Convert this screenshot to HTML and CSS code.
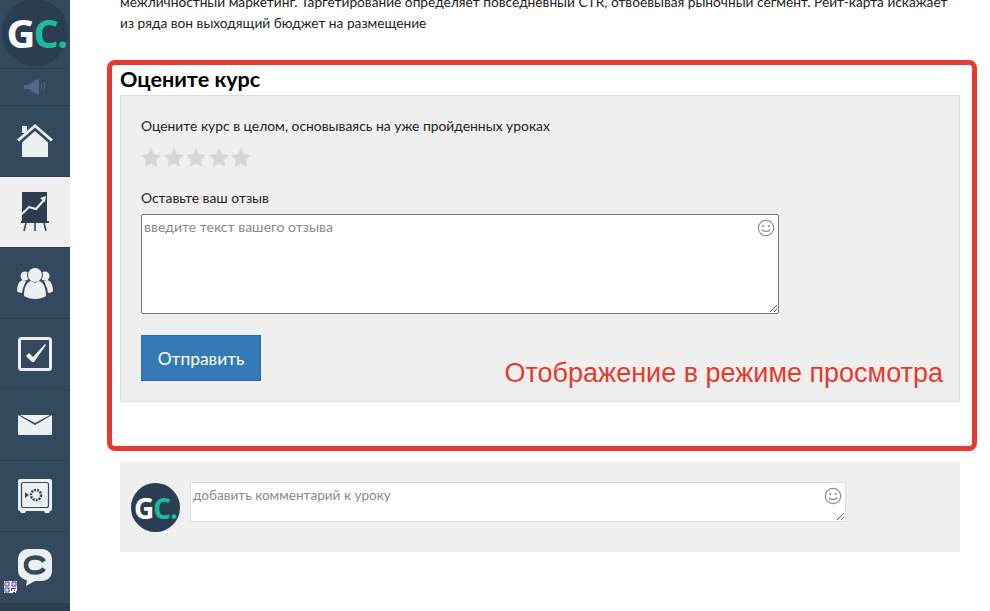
FILE: index.html
```html
<!DOCTYPE html>
<html lang="ru">
<head>
<meta charset="utf-8">
<title>Оцените курс</title>
<link rel="stylesheet" href="styles.css">
</head>
<body>
<div class="app">
  <nav class="side">
    <div class="logo-cell">
      <div class="logo"><span class="g">G</span><span class="c">C</span><span class="c">.</span></div>
    </div>
    <div class="sound">
      <svg width="22" height="16" viewBox="0 0 22 16"><rect x="0" y="6" width="4" height="4" fill="#4f6a86"/><path d="M4 6l9-5.500h2v15h-2l-9-5.500z" fill="#4f6a86"/><path d="M17 5c1 2 1 4 0 6M19.500 3c1.700 3 1.700 7 0 10" fill="none" stroke="#4f6a86" stroke-width="1"/></svg>
    </div>
    <a class="item">
      <svg width="36" height="34" viewBox="0 0 36 34"><rect x="5" y="2" width="5" height="7" fill="#ecf0f1"/><path d="M0 15.500L18 0l18 15.500-2 2L18 3.500 2 17.500z" fill="#ecf0f1"/><path d="M5 18.400L18 7l13 11.400V33H5z" fill="#ecf0f1"/></svg>
    </a>
    <a class="item active">
      <svg width="28" height="40" viewBox="0 0 28 40"><rect x="1" y="0" width="25" height="29" fill="#2c3e50"/><path d="M1 22l7-7 7 2 8-9" fill="none" stroke="#ecf0f1" stroke-width="2"/><path d="M25 4l-1 6-5-4z" fill="#ecf0f1"/><rect x="0" y="29" width="28" height="2" fill="#2c3e50"/><path d="M5 31l-2 8M14 31v8M23 31l2 8" stroke="#34495e" stroke-width="1.600"/></svg>
    </a>
    <a class="item">
      <svg width="36" height="32" viewBox="0 0 36 32"><circle cx="8" cy="9" r="4.500" fill="#ecf0f1"/><circle cx="28" cy="9" r="4.500" fill="#ecf0f1"/><path d="M0 24c0-6 2-10 6-11l3 1-3 7-1 5c-2 0-4-1-5-2zM36 24c0-6-2-10-6-11l-3 1 3 7 1 5c2 0 4-1 5-2z" fill="#ecf0f1"/><circle cx="18" cy="8" r="7.500" fill="#ecf0f1" stroke="#34495e"/><path d="M7 29c0-9 3-14 7-15l4 2 4-2c4 1 7 6 7 15-3 2-7 3-11 3s-8-1-11-3z" fill="#ecf0f1"/></svg>
    </a>
    <a class="item">
      <svg width="36" height="36" viewBox="0 0 36 36"><rect x="1.500" y="1.500" width="31" height="31" rx="2" fill="none" stroke="#ecf0f1" stroke-width="3" transform="translate(1 1)"/><path d="M9 20l3-3 4 4L28 8l1 1-12 17h-2z" fill="#ecf0f1"/></svg>
    </a>
    <a class="item">
      <svg width="34" height="20" viewBox="0 0 34 20"><path d="M0 0l17 10L34 0v19a1 1 0 0 1-1 1H1a1 1 0 0 1-1-1z" fill="#ecf0f1"/><path d="M2 0h30L17 8z" fill="#ecf0f1"/></svg>
    </a>
    <a class="item">
      <svg width="34" height="34" viewBox="0 0 34 34"><path d="M2 0h30a2 2 0 0 1 2 2v28a2 2 0 0 1-2 2l-1 2h-4l-1-2H8l-1 2H3l-1-2a2 2 0 0 1-2-2V2a2 2 0 0 1 2-2z" fill="#ecf0f1"/><rect x="3.500" y="3.500" width="27" height="25" rx="2" fill="none" stroke="#34495e" stroke-width="1.200"/><circle cx="18" cy="16" r="5" fill="none" stroke="#34495e" stroke-width="2.500" stroke-dasharray="2 1"/><path d="M7 13l4 3-4 3z" fill="#34495e"/></svg>
    </a>
    <a class="item chat">
      <svg width="34" height="38" viewBox="0 0 34 38"><path d="M11 0h12c7 0 11 4 11 11v10c0 7-4 11-11 11h-6l-9 5 1-5.500C4 30 0 27 0 21V11C0 4 4 0 11 0z" fill="#ecf0f1"/><path d="M26 12.500c-1.500-2.500-5-4-9-4-5.500 0-9 3-9 7.500s3.500 7.500 9 7.500c4 0 7.500-1.500 9-4" fill="none" stroke="#34495e" stroke-width="4.500"/></svg>
      <svg class="qr" width="13" height="12" viewBox="0 0 13 12"><rect width="13" height="12" fill="#fff"/><path d="M1 1h4v4H1zM8 1h4v4H8zM1 7h4v4H1z" fill="none" stroke="#3a2fb0"/><rect x="2.500" y="2.500" width="1" height="1" fill="#d02a8a"/><rect x="9.500" y="2.500" width="1" height="1" fill="#d02a8a"/><rect x="2.500" y="8.500" width="1" height="1" fill="#d02a8a"/><path d="M7 7h5v1H8v2H7zM10 9h1v1h-1zM12 10h1v2h-1zM9 11h2v1H9z" fill="#3a2fb0"/></svg>
    </a>
    <div class="side-foot"></div>
  </nav>
  <main class="content">
    <p class="lesson">межличностный маркетинг. Таргетирование определяет повседневный CTR, отвоевывая рыночный сегмент. Рейт-карта искажает<br>из ряда вон выходящий бюджет на размещение</p>
    <section class="frame">
      <h2 class="title">Оцените курс</h2>
      <div class="panel">
        <p class="label">Оцените курс в целом, основываясь на уже пройденных уроках</p>
        <div class="stars">
          <svg width="20" height="19" viewBox="0 0 20 19"><path class="star" d="M10 0l3 6.300 7 .9-5.100 4.800 1.300 6.900L10 15.500l-6.200 3.400 1.300-6.900L0 7.200l7-.9z"/></svg>
          <svg width="20" height="19" viewBox="0 0 20 19"><path class="star" d="M10 0l3 6.300 7 .9-5.100 4.800 1.300 6.900L10 15.500l-6.200 3.400 1.300-6.900L0 7.200l7-.9z"/></svg>
          <svg width="20" height="19" viewBox="0 0 20 19"><path class="star" d="M10 0l3 6.300 7 .9-5.100 4.800 1.300 6.900L10 15.500l-6.200 3.400 1.300-6.900L0 7.200l7-.9z"/></svg>
          <svg width="20" height="19" viewBox="0 0 20 19"><path class="star" d="M10 0l3 6.300 7 .9-5.100 4.800 1.300 6.900L10 15.500l-6.200 3.400 1.300-6.900L0 7.200l7-.9z"/></svg>
          <svg width="20" height="19" viewBox="0 0 20 19"><path class="star" d="M10 0l3 6.300 7 .9-5.100 4.800 1.300 6.900L10 15.500l-6.200 3.400 1.300-6.900L0 7.200l7-.9z"/></svg>
        </div>
        <p class="label label-review">Оставьте ваш отзыв</p>
        <div class="field review">
          <textarea class="input input-dark" placeholder="введите текст вашего отзыва"></textarea>
          <svg class="smile" width="18" height="18" viewBox="0 0 18 18"><circle cx="9" cy="9" r="7.700" fill="none" stroke="#8a8f96" stroke-width="1.200"/><circle cx="6.200" cy="7" r="1.100" fill="#8a8f96"/><circle cx="11.800" cy="7" r="1.100" fill="#8a8f96"/><path d="M4.800 10.500c1 2.400 7.400 2.400 8.400 0" fill="none" stroke="#8a8f96" stroke-width="1.200"/></svg>
        </div>
        <button class="send" type="button">Отправить</button>
      </div>
      <div class="note">Отображение в режиме просмотра</div>
    </section>
    <section class="comment">
      <div class="avatar"><span class="g">G</span><span class="c">C</span><span class="c">.</span></div>
      <div class="field comment-field">
        <textarea class="input input-light" placeholder="добавить комментарий к уроку"></textarea>
        <svg class="smile" width="18" height="18" viewBox="0 0 18 18"><circle cx="9" cy="9" r="7.700" fill="none" stroke="#8a8f96" stroke-width="1.200"/><circle cx="6.200" cy="7" r="1.100" fill="#8a8f96"/><circle cx="11.800" cy="7" r="1.100" fill="#8a8f96"/><path d="M4.800 10.500c1 2.400 7.400 2.400 8.400 0" fill="none" stroke="#8a8f96" stroke-width="1.200"/></svg>
      </div>
    </section>
  </main>
</div>
</body>
</html>
```
FILE: styles.css
```css
* { box-sizing: border-box; }
html, body { margin: 0; height: 100%; overflow: hidden; background: #fff; }
body { font-family: "Lato", "Open Sans", sans-serif; color: #222; }
.app { display: flex; height: 611px; }
.side { width: 70px; flex: none; background: #34495e; display: flex; flex-direction: column; }
.logo-cell { height: 69px; border-bottom: 1px solid #2c3e50; padding: 0 0 0 2px; overflow: hidden; }
.logo { width: 66px; height: 67px; margin-top: -1px; padding-left: 3px; border-radius: 50%; background: #2a3d53; display: flex; align-items: center; justify-content: center; font: 700 40px/1 "Open Sans", sans-serif; letter-spacing: -2px; }
.g { color: #fff; }
.c { color: #1abc9c; }
.sound { height: 37px; border-bottom: 1px solid #2c3e50; display: flex; align-items: center; justify-content: center; }
.item { height: 71px; display: flex; align-items: center; justify-content: center; border-bottom: 1px solid #2c3e50; position: relative; }
.item.active { background: #efefef; }
.side-foot { flex: 1; background: #2c3e50; }
.qr { position: absolute; left: 4px; bottom: 10px; }
.chat { border-bottom: 0; }
.content { width: 920px; flex: none; padding-left: 37px; }
.lesson { margin: -9px 0 0 13px; font-size: 13.720px; line-height: 21px; color: #222; white-space: nowrap; }
.frame { position: relative; width: 870px; height: 391px; margin-top: 27px; border: 5px solid #e53b2f; border-radius: 8px; padding: 1px 0 0 8px; }
.title { margin: 0; font: 700 21.600px/26px "Lato", sans-serif; color: #000; }
.panel { width: 840px; height: 307px; margin-top: 3px; background: #efefef; border: 1px solid #ddd; padding: 21px 20px 0; }
.label { margin: 0; font-size: 13.860px; line-height: 18px; color: #222; }
.stars { display: flex; gap: 2.500px; margin-top: 13px; }
.star { fill: #d5d5d5; }
.label-review { margin-top: 22px; }
.field { position: relative; }
.review { width: 638px; height: 100px; margin-top: 7px; }
.input { display: block; width: 100%; height: 100%; padding: 3px 2px; font: 14px/18px "Lato", sans-serif; background: #fff; border-radius: 2px; outline: 0; }
.input::placeholder { color: #8a8a8a; opacity: 1; }
.input-dark { border: 1px solid #767676; }
.input-light { border: 1px solid #ddd; font-size: 13.600px; }
.smile { position: absolute; right: 4px; top: 5px; }
.send { display: block; width: 120px; height: 46px; margin-top: 21px; background: #337ab7; border: 1px solid #2e6da4; color: #fff; font: 400 17.400px "Lato", sans-serif; }
.note { position: absolute; right: 29px; top: 291px; color: #e53b2f; font: 27px/34px "Liberation Sans", sans-serif; white-space: nowrap; }
.comment { display: flex; gap: 10px; width: 840px; height: 90px; margin: 11px 0 0 13px; padding: 20px 0 0 11px; background: #efefef; }
.avatar { width: 49px; height: 49px; margin-top: 1px; border-radius: 50%; background: #2a3d53; display: flex; align-items: center; justify-content: center; font: 700 28px/1 "Open Sans", sans-serif; letter-spacing: -1px; }
.comment-field { width: 656px; height: 40px; }
```
